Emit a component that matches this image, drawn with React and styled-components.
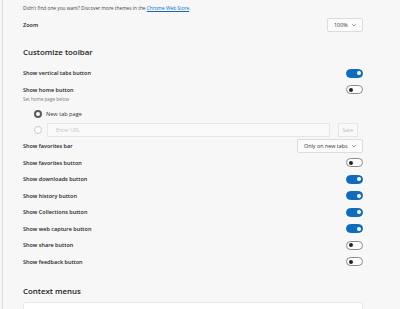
import React from 'react';
import styled, { createGlobalStyle } from 'styled-components';

const GlobalStyle = createGlobalStyle`
  html, body {
    margin: 0;
    padding: 0;
    background: #f7f7f7;
  }
  body {
    font-family: "Open Sans", "Noto Sans", sans-serif;
    color: #1b1b1b;
    overflow: hidden;
  }
`;

const Page = styled.div`
  width: 400px;
  height: 309px;
  box-sizing: border-box;
  border-left: 1px solid #dcdcdc;
  margin-left: 2px;
  padding: 3px 39px 0 20px;
  overflow: hidden;
`;

const Note = styled.div`
  font-size: 4.8px;
  line-height: 10px;
  color: #444;
  a {
    color: #0f6cbd;
    text-decoration: underline;
  }
`;

const Row = styled.div`
  display: flex;
  align-items: center;
  justify-content: space-between;
  height: ${(p) => p.h || 16.5}px;
  margin-top: ${(p) => p.mt || 0}px;
`;

const Label = styled.div`
  font-size: 5.5px;
  font-weight: 600;
  color: #222;
`;

const Sub = styled.div`
  font-size: 4.6px;
  color: #777;
  line-height: 8px;
  margin-top: -3px;
  margin-bottom: 3.4px;
`;

const Heading = styled.h2`
  margin: 0;
  font-size: 7.9px;
  font-weight: 600;
  color: #1b1b1b;
  height: ${(p) => p.h}px;
  display: flex;
  align-items: center;
  padding-top: ${(p) => p.pt || 0}px;
`;

const Select = styled.div`
  display: flex;
  align-items: center;
  justify-content: space-between;
  box-sizing: border-box;
  height: 14px;
  width: ${(p) => p.w}px;
  padding: 0 5px 0 6px;
  background: #fbfbfb;
  border: 1px solid #dcdcdc;
  border-radius: 2px;
  font-size: 5.4px;
  color: #333;
  svg {
    width: 6px;
    height: 6px;
  }
`;

const Toggle = styled.div`
  box-sizing: border-box;
  width: 17px;
  height: 9px;
  border-radius: 5px;
  position: relative;
  background: ${(p) => (p.on ? '#0f6cbd' : '#fdfdfd')};
  border: 1px solid ${(p) => (p.on ? '#0f6cbd' : '#8a8a8a')};
  &::after {
    content: '';
    position: absolute;
    top: 1.5px;
    left: ${(p) => (p.on ? '9.5px' : '2px')};
    width: 4px;
    height: 4px;
    border-radius: 50%;
    background: ${(p) => (p.on ? '#fff' : '#222')};
  }
`;

const RadioRow = styled.div`
  display: flex;
  align-items: center;
  gap: 4px;
  height: 16px;
  padding-left: 11px;
`;

const Radio = styled.span`
  box-sizing: border-box;
  width: 8px;
  height: 8px;
  border-radius: 50%;
  flex: none;
  border: ${(p) => (p.checked ? '2px solid #5a5a5a' : '1px solid #c8c8c8')};
  background: #fff;
`;

const RadioLabel = styled.span`
  font-size: 5.6px;
  color: #333;
`;

const UrlInput = styled.div`
  flex: 1;
  box-sizing: border-box;
  height: 14px;
  margin-left: 1px;
  border: 1px solid #e6e6e6;
  background: #f9f9f9;
  font-size: 5.2px;
  color: #c4c4c4;
  display: flex;
  align-items: center;
  padding-left: 8px;
`;

const SaveButton = styled.div`
  box-sizing: border-box;
  width: 20px;
  height: 14px;
  margin-left: 4px;
  margin-right: 5px;
  border: 1px solid #e6e6e6;
  background: #f9f9f9;
  font-size: 5px;
  color: #bcbcbc;
  display: flex;
  align-items: center;
  justify-content: center;
`;

const Card = styled.div`
  height: 20px;
  background: #fff;
  border: 1px solid #e8e8e8;
  border-radius: 3px;
`;

const Chevron = () => (
  <svg viewBox="0 0 12 12" fill="none" stroke="#555" strokeWidth="1.2">
    <path d="M2.5 4.5 6 8l3.5-3.5" />
  </svg>
);

const toggles = [
  ['Show favorites button', false],
  ['Show downloads button', true],
  ['Show history button', true],
  ['Show Collections button', true],
  ['Show web capture button', true],
  ['Show share button', false],
  ['Show feedback button', false],
];

export default function App() {
  return (
    <>
      <GlobalStyle />
      <Page>
        <Note>
          Didn't find one you want? Discover more themes in the <a>Chrome Web Store</a>.
        </Note>
        <Row h={18} mt={3}>
          <Label>Zoom</Label>
          <Select w={36}>
            100%
            <Chevron />
          </Select>
        </Row>
        <Heading h={25.6} pt={5.2}>Customize toolbar</Heading>
        <Row>
          <Label>Show vertical tabs button</Label>
          <Toggle on />
        </Row>
        <Row>
          <Label>Show home button</Label>
          <Toggle />
        </Row>
        <Sub>Set home page below</Sub>
        <RadioRow>
          <Radio checked />
          <RadioLabel>New tab page</RadioLabel>
        </RadioRow>
        <RadioRow>
          <Radio />
          <UrlInput>Enter URL</UrlInput>
          <SaveButton>Save</SaveButton>
        </RadioRow>
        <Row>
          <Label>Show favorites bar</Label>
          <Select w={66}>
            Only on new tabs
            <Chevron />
          </Select>
        </Row>
        {toggles.map(([label, on]) => (
          <Row key={label}>
            <Label>{label}</Label>
            <Toggle on={on} />
          </Row>
        ))}
        <Heading h={22} pt={9.5}>Context menus</Heading>
        <Card />
      </Page>
    </>
  );
}
